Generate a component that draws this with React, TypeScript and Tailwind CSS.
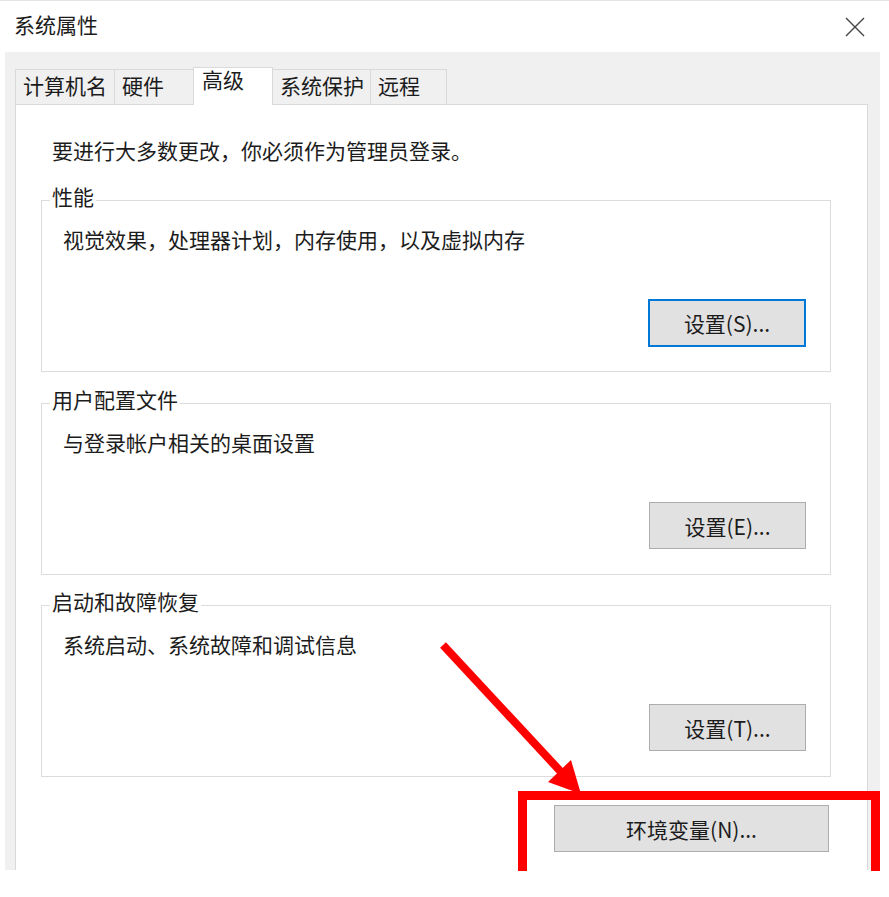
import React from "react";

// ─── 分组框 ───────────────────────────────────────────────
function GroupBox({
  title,
  desc,
  button,
  focused,
  className,
}: {
  title: string;
  desc: string;
  button: string;
  focused?: boolean;
  className?: string;
}) {
  return (
    <fieldset className={`ml-[25px] h-[187px] w-[790px] border border-[#dcdcdc] p-0 ${className ?? ""}`}>
      <legend className="ml-[8px] px-[2px] pb-[8px] leading-[22px]">{title}</legend>
      <p className="mt-[13px] pl-[21px] leading-[22px]">{desc}</p>
      <div className="mt-[49px] flex justify-end pr-[24px]">
        <button
          type="button"
          className={
            focused
              ? "h-[48px] w-[158px] border-2 border-[#0078d7] bg-[#e1e1e1] leading-[28px]"
              : "h-[47px] w-[157px] border border-[#adadad] bg-[#e1e1e1] leading-[28px]"
          }
        >
          {button}
        </button>
      </div>
    </fieldset>
  );
}

const TABS = ["计算机名", "硬件", "高级", "系统保护", "远程"];
const TAB_W = [100, 80, 80, 98, 76];

export default function App() {
  return (
    <div className="relative h-[897px] w-[889px] overflow-hidden bg-white font-['Noto_Sans_CJK_SC','Noto_Sans',sans-serif] text-[21px] text-[#1c1c1c]">
      <div className="border-t border-[#e3e3e3]" />
      <div className="ml-[5px] w-[875px]">
        {/* 标题栏 */}
        <div className="flex h-[51px] items-center justify-between pb-[6px] pl-[9px] pr-[15px]">
          <span className="leading-[28px]">系统属性</span>
          <svg width="20" height="20" viewBox="0 0 20 20" className="mt-[6px] text-[#444]">
            <path d="M1 1L19 19M19 1L1 19" stroke="currentColor" strokeWidth="1.4" fill="none" />
          </svg>
        </div>

        {/* 对话框主体 */}
        <div className="flex h-[818px] flex-col bg-[#f0f0f0] pl-[10px] pr-[12px] pt-[14px]">
          <div className="relative z-10 flex h-[38px] items-end">
            {TABS.map((t, i) =>
              t === "高级" ? (
                <div
                  key={t}
                  style={{ width: TAB_W[i] }}
                  className="-mb-px -ml-[2px] flex h-[38px] items-start border border-b-0 border-[#d9d9d9] bg-white pl-[8px] pt-[0px] leading-[22px]"
                >
                  {t}
                </div>
              ) : (
                <div
                  key={t}
                  style={{ width: TAB_W[i] }}
                  className="flex h-[35px] items-start border border-b-0 border-l-0 border-[#d9d9d9] bg-[#f0f0f0] pl-[7px] pt-[4px] leading-[22px] first:border-l"
                >
                  {t}
                </div>
              ),
            )}
          </div>

          <div className="flex-1 border border-b-0 border-[#d9d9d9] bg-white">
            <p className="ml-[36px] mt-[34px] leading-[22px]">要进行大多数更改，你必须作为管理员登录。</p>
            <GroupBox
              className="mt-[24px]"
              title="性能"
              desc="视觉效果，处理器计划，内存使用，以及虚拟内存"
              button="设置(S)..."
              focused
            />
            <GroupBox
              className="mt-[16px]"
              title="用户配置文件"
              desc="与登录帐户相关的桌面设置"
              button="设置(E)..."
            />
            <GroupBox
              className="mt-[15px]"
              title="启动和故障恢复"
              desc="系统启动、系统故障和调试信息"
              button="设置(T)..."
            />
            <div className="mt-[28px] flex justify-end pr-[38px]">
              <button
                type="button"
                className="h-[47px] w-[275px] border border-[#adadad] bg-[#e1e1e1] leading-[28px]"
              >
                环境变量(N)...
              </button>
            </div>
          </div>
        </div>
      </div>

      {/* 标注：红框与箭头 */}
      <div className="absolute left-[518px] top-[791px] h-[80px] w-[362px] border-[9px] border-b-0 border-[#ff0000]" />
      <svg className="pointer-events-none absolute left-0 top-0" width="889" height="897">
        <line x1="443" y1="645" x2="562" y2="773" stroke="#ff0000" strokeWidth="8" />
        <polygon points="581,794 548,782 571,760" fill="#ff0000" />
      </svg>
    </div>
  );
}
